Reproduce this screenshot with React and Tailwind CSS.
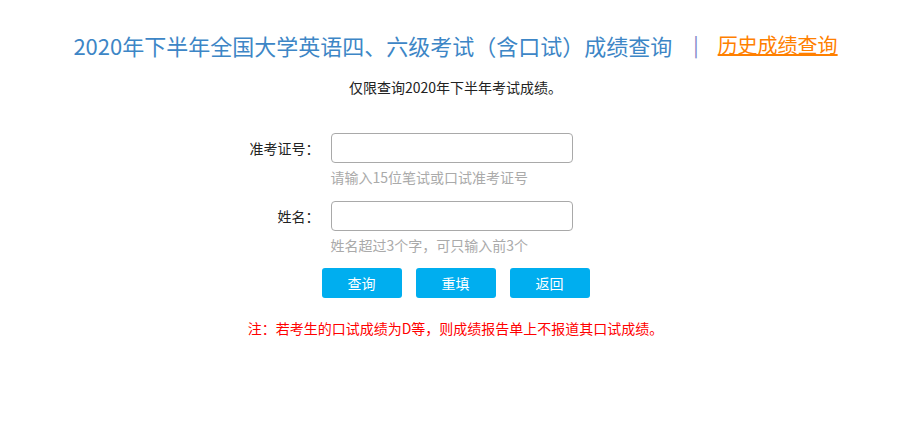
import { useState } from "react";

const Field = ({ label, hint, value, onChange }) => (
  <div className="flex">
    <label className="w-[100px] h-[30px] flex items-center justify-end text-[14px] text-[#222]">
      {label}
    </label>
    <div className="ml-[11px]">
      <input
        value={value}
        onChange={(e) => onChange(e.target.value)}
        className="w-[242px] h-[30px] border border-[#a9a9a9] rounded-[4px] px-2 outline-none text-[14px]"
      />
      <div className="mt-[3px] text-[14px] leading-[22px] text-[#aaa]">{hint}</div>
    </div>
  </div>
);

export default function App() {
  const [zkz, setZkz] = useState("");
  const [name, setName] = useState("");

  return (
    <div className="w-full min-h-[434px] bg-white font-['Microsoft_YaHei','Noto_Sans_CJK_SC',sans-serif]">
      <div className="pt-[29px] flex items-center justify-center">
        <h1 className="text-[22px] leading-[32px] text-[#3d86c6] font-normal">
          2020年下半年全国大学英语四、六级考试（含口试）成绩查询
        </h1>
        <span className="ml-[21px] mr-[19px] text-[20px] leading-[32px] text-[#7b7fc6]">|</span>
        <a href="#" className="text-[20px] leading-[32px] text-[#ff8000] underline">
          历史成绩查询
        </a>
      </div>

      <p className="mt-[16px] text-center text-[14px] leading-[20px] text-[#222]">
        仅限查询2020年下半年考试成绩。
      </p>

      <div className="mx-auto w-[472px] mt-[36px] flex flex-col gap-[13px]">
        <Field
          label="准考证号："
          hint="请输入15位笔试或口试准考证号"
          value={zkz}
          onChange={setZkz}
        />
        <Field
          label="姓名："
          hint="姓名超过3个字，可只输入前3个"
          value={name}
          onChange={setName}
        />
      </div>

      <div className="mt-[12px] flex justify-center gap-[14px]">
        {["查询", "重填", "返回"].map((t) => (
          <button
            key={t}
            className="w-[80px] h-[30px] rounded-[3px] bg-[#00aeef] text-white text-[14px]"
          >
            {t}
          </button>
        ))}
      </div>

      <p className="mt-[20px] text-center text-[14px] leading-[20px] text-[#ff0000]">
        注：若考生的口试成绩为D等，则成绩报告单上不报道其口试成绩。
      </p>
    </div>
  );
}
